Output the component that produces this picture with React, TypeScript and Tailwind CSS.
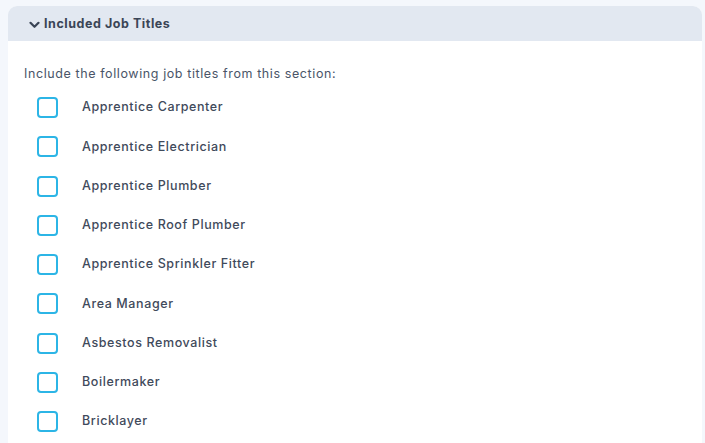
import React from "react";

const titles = [
  "Apprentice Carpenter",
  "Apprentice Electrician",
  "Apprentice Plumber",
  "Apprentice Roof Plumber",
  "Apprentice Sprinkler Fitter",
  "Area Manager",
  "Asbestos Removalist",
  "Boilermaker",
  "Bricklayer",
];

export default function App() {
  return (
    <div className="w-[705px] h-[443px] overflow-hidden bg-[#f4f7fc] pl-[8px] pr-[3px] pt-[6px]" style={{ fontFamily: "Inter, 'Noto Sans', sans-serif" }}>
      <div className="h-full bg-white rounded-t-[9px] overflow-hidden">
        <div className="h-[35px] bg-[#e2e8f1] flex items-center pl-[21px] pt-[1px] gap-[4px] text-[#3a4556]">
          <svg width="11" height="8" viewBox="0 0 11 8" className="mt-[1px]">
            <path d="M1.5 1.8 L5.5 5.8 L9.5 1.8" fill="none" stroke="#3a4556" strokeWidth="2.2" strokeLinecap="round" strokeLinejoin="round" />
          </svg>
          <span className="text-[12.5px] font-bold tracking-[0.55px]">Included Job Titles</span>
        </div>
        <div className="pl-[16px] pt-[25px]">
          <div className="text-[12.5px] tracking-[0.6px] text-[#4a5568] leading-[16px]">Include the following job titles from this section:</div>
          <div className="mt-[6px] flex flex-col">
            {titles.map((t) => (
              <div key={t} className="h-[39.25px] flex items-center">
                <div className="ml-[13px] w-[21px] h-[21px] rounded-[4px] border-2 border-[#2cb5e6] bg-white" />
                <span className="ml-[24px] text-[12.5px] tracking-[0.6px] font-medium text-[#3f4a5b]">{t}</span>
              </div>
            ))}
          </div>
        </div>
      </div>
    </div>
  );
}
